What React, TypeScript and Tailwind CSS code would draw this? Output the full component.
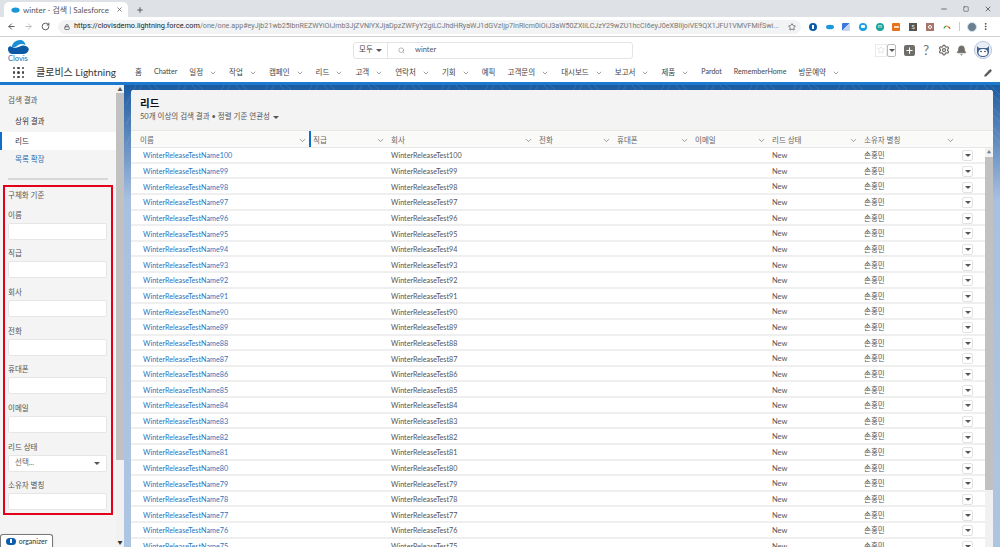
import { ArrowLeft, ArrowRight, RotateCw, Lock, Star, Plus, X, Minus, Square, Search, ChevronDown, Bell, Settings, Pencil, MoreVertical } from "lucide-react";

const rows = Array.from({ length: 26 }, (_, i) => 100 - i);
const nav = [
  ["홈", false], ["Chatter", false], ["일정", true], ["작업", true], ["캠페인", true], ["리드", true], ["고객", true], ["연락처", true], ["기회", true], ["예픽", false],
  ["고객문의", true], ["대시보드", true], ["보고서", true], ["제품", true], ["Pardot", false], ["RememberHome", false], ["방문예약", true],
] as [string, boolean][];
const cols = [
  ["이름", "w-[173px]", false], ["직급", "w-[78px]", true], ["회사", "w-[148px]", false], ["전화", "w-[78px]", false],
  ["휴대폰", "w-[78px]", false], ["이메일", "w-[77px]", false], ["리드 상태", "w-[92px]", false], ["소유자 별칭", "w-[97px]", false],
] as [string, string, boolean][];
const fields = ["이름", "직급", "회사", "전화", "휴대폰", "이메일", "리드 상태", "소유자 별칭"];

function Caret({ className = "" }: { className?: string }) {
  return <span className={`w-0 h-0 border-x-[3px] border-x-transparent border-t-[3.5px] border-t-[#555] ${className}`} />;
}

function Logo() {
  return (
    <svg viewBox="0 0 21 14" className="w-[21px] h-[14px]">
      <path d="M4 7 C4 3 8 0 12 0 C15 0 17 2 17.5 5 C14 3 11 4 9 6 C7 7.5 5 7.5 4 7 Z" fill="#1b8fd6" />
      <path d="M0 9 C0 7 1.5 6 3 6.5 C7 9 11 7 13 6 C16 5 19 6 20.5 8 C21.5 11 19 14 16 14 L5 14 C2 14 0 12 0 9 Z" fill="#0c5aa6" />
    </svg>
  );
}

function Extensions() {
  return (
    <div className="ml-[8px] flex items-center gap-[8.7px] text-[6px] leading-none text-white">
      <span className="w-[8px] h-[8px] rounded-full bg-[#0b5cab] flex items-center justify-center"><span className="w-[2px] h-[4px] bg-white" /></span>
      <svg viewBox="0 0 12 8" className="w-[8px] h-[8px]"><ellipse cx="6" cy="4" rx="6" ry="3.5" fill="#1b96d8" /></svg>
      <span className="w-[8px] h-[8px] rounded-[1px] bg-gradient-to-br from-[#3b78e0] from-50% to-[#c5d4ee] to-50%" />
      <span className="w-[8px] h-[8px] rounded-full bg-[#18a0e4] flex items-center justify-center"><span className="w-[4px] h-[3px] bg-white rounded-[1px]" /></span>
      <span className="w-[8px] h-[8px] rounded-full bg-[#17a59a] flex items-center justify-center text-[5px]">m</span>
      <span className="w-[8px] h-[8px] rounded-[1px] bg-[#e8701a] flex items-center justify-center"><span className="w-[5px] h-[2px] bg-[#ffd9bd]" /></span>
      <span className="w-[8px] h-[8px] bg-[#555] flex items-center justify-center">S</span>
      <span className="w-[8px] h-[8px] bg-[#a8756a] flex items-center justify-center"><span className="w-[4px] h-[4px] rounded-full border border-white" /></span>
      <svg viewBox="0 0 10 8" className="w-[8px] h-[8px]">
        <path d="M1 6 C2 4 3 3 4 3" stroke="#2a9a4a" strokeWidth="1.5" fill="none" />
        <path d="M4 3 C5 2.5 6 3 7 4" stroke="#e0a020" strokeWidth="1.5" fill="none" />
        <path d="M7 4 L9 6" stroke="#d8342c" strokeWidth="1.5" fill="none" />
      </svg>
    </div>
  );
}

function Avatar() {
  return (
    <svg viewBox="0 0 18 18" className="ml-[7px] w-[18px] h-[18px]">
      <circle cx="9" cy="9" r="8.6" fill="#e8eef6" stroke="#9fb3cf" strokeWidth="0.7" />
      <path d="M3 5 L5 7 L13 7 L15 5 L15 11 C15 14 12 16 9 16 C6 16 3 14 3 11 Z" fill="#47648f" />
      <ellipse cx="9" cy="11.5" rx="4.5" ry="3.5" fill="#ffffff" />
      <circle cx="7" cy="10.5" r="0.8" fill="#27374f" />
      <circle cx="11" cy="10.5" r="0.8" fill="#27374f" />
    </svg>
  );
}

export default function App() {
  return (
    <div className="w-[1000px] h-[547px] overflow-hidden flex flex-col bg-white text-[#3e3e3c] font-['Lato','Noto_Sans_CJK_KR',sans-serif]">
      {/* browser tabs */}
      <div className="h-[17px] shrink-0 bg-[#dee1e6] flex items-end pl-[4px]">
        <div className="w-[124px] h-[15px] bg-white rounded-t-[5px] flex items-center pl-[7px] pr-[5px] gap-[3px] text-[8px] text-[#555]">
          <svg viewBox="0 0 12 8" className="w-[9px] h-[6px]"><ellipse cx="6" cy="4" rx="5.5" ry="3.5" fill="#1b96d8" /></svg>
          <span className="flex-1 truncate">winter - 검색 | Salesforce</span>
          <X size={7} strokeWidth={2.5} />
        </div>
        <Plus size={8} strokeWidth={2.5} className="ml-[8px] mb-[3px] text-[#444]" />
        <div className="ml-auto flex items-center gap-[15px] pr-[8px] mb-[4px] text-[#333]">
          <Minus size={8} strokeWidth={2} />
          <Square size={6} strokeWidth={2} />
          <X size={8} strokeWidth={2} />
        </div>
      </div>
      {/* address bar */}
      <div className="h-[20px] shrink-0 flex items-center border-b border-[#d0d0d0] pl-[7px] pr-[7px]">
        <ArrowLeft size={9} strokeWidth={2.5} className="text-[#555]" />
        <ArrowRight size={9} strokeWidth={2.5} className="ml-[8px] text-[#bbb]" />
        <RotateCw size={9} strokeWidth={2.5} className="ml-[8px] text-[#555]" />
        <div className="ml-[8px] w-[743px] h-[14px] rounded-full bg-[#f1f3f4] flex items-center pl-[6px] pr-[5px] gap-[4px]">
          <Lock size={6} strokeWidth={3} className="text-[#555] shrink-0" />
          <span className="flex-1 whitespace-nowrap text-[7.15px] text-[#777] font-['Roboto','Noto_Sans',sans-serif]"><span className="text-[#222] text-[7.3px]">https://clovisdemo.lightning.force.com</span>/one/one.app#eyJjb21wb25lbnREZWYiOiJmb3JjZVNlYXJjaDpzZWFyY2giLCJhdHRyaWJ1dGVzIjp7InRlcm0iOiJ3aW50ZXIiLCJzY29wZU1hcCI6eyJ0eXBlIjoiVE9QX1JFU1VMVFMifSwi...</span>
          <Star size={8} strokeWidth={2} className="text-[#444] shrink-0" />
        </div>
        <Extensions />
        <span className="ml-[8px] w-px h-[9px] bg-[#ccc]" />
        <span className="ml-[7px] w-[10px] h-[10px] rounded-full bg-[#6b7f8f] border border-[#cfe0ee]" />
        <MoreVertical size={9} strokeWidth={2.5} className="ml-[4px] text-[#444]" />
      </div>
      {/* app header */}
      <div className="h-[48px] shrink-0 border-b-[3px] border-[#1b7ad0] bg-white flex flex-col">
        <div className="h-[26px] shrink-0 flex items-center">
          <div className="w-[40px] pl-[8px] pt-[3px] flex flex-col">
            <Logo />
            <span className="mt-[1px] text-[7.5px] leading-[8px] text-[#1a6cb5]">Clovis</span>
          </div>
          <div className="ml-[313px] w-[280px] h-[17px] border border-[#e4e4e4] rounded-[3px] flex items-center text-[7.5px]">
            <div className="w-[34px] h-full border-r border-[#e4e4e4] flex items-center justify-center gap-[3px]">모두 <Caret /></div>
            <Search size={7} className="ml-[10px] text-[#888]" />
            <span className="ml-[10px] text-[#555]">winter</span>
          </div>
          <div className="ml-auto pr-[8px] flex items-center">
            <div className="w-[12px] h-[13px] border border-[#eaeaea] flex items-center justify-center"><Star size={8} className="text-[#ddd]" /></div>
            <div className="w-[9px] h-[13px] border border-[#bbb] rounded-[2px] flex items-center justify-center"><Caret /></div>
            <div className="ml-[8px] w-[11px] h-[11px] rounded-[2px] bg-[#706e6b] flex items-center justify-center"><Plus size={9} strokeWidth={3} className="text-white" /></div>
            <span className="ml-[8px] text-[13px] leading-none text-[#706e6b]">?</span>
            <Settings size={12} strokeWidth={2.5} className="ml-[9px] text-[#706e6b]" />
            <Bell size={11} fill="#706e6b" className="ml-[6px] text-[#706e6b]" />
            <Avatar />
          </div>
        </div>
        <div className="flex-1 flex items-center">
          <div className="w-[11px] h-[11px] grid grid-cols-3 gap-[2px] shrink-0 ml-[13px]">
            {Array.from({ length: 9 }, (_, i) => <span key={i} className="bg-[#444] rounded-full" />)}
          </div>
          <span className="ml-[12px] w-[99px] shrink-0 text-[10px] text-[#333] whitespace-nowrap">클로비스 Lightning</span>
          <div className="flex items-center gap-[12px] text-[7.5px] whitespace-nowrap text-[#444]">
            {nav.map(([t, c]) => (
              <span key={t} className="flex items-center gap-[6px]">
                <span className={/^[A-Za-z]/.test(t) ? "text-[7.1px]" : ""}>{t}</span>
                {c && <ChevronDown size={8} strokeWidth={1.5} />}
              </span>
            ))}
          </div>
          <Pencil size={8} fill="#555" className="ml-auto mr-[8px] text-[#555]" />
        </div>
      </div>
      {/* body */}
      <div className="flex-1 min-h-0 flex">
        <aside className="w-[116px] shrink-0 bg-[#f4f4f4] relative text-[7.5px] text-[#555]">
          <div className="h-[47px] pl-[8px] pt-[11px]">
            <div className="leading-[10px]">검색 결과</div>
            <div className="mt-[11px] pl-[7px] leading-[10px] text-[#333]">상위 결과</div>
          </div>
          <div className="h-[18px] bg-white border-l-2 border-[#0f6fc6] pl-[13px] pt-[2px] flex items-center text-[#333]">리드</div>
          <div className="h-[19px] pl-[15px] pt-[1px] flex items-center text-[#1a6cb5]">목록 확장</div>
          <div className="mx-[8px] mt-[9px] h-[2px] bg-[#d8d8d8]" />
          <div className="ml-[3px] mt-[5px] w-[110px] h-[330px] border-2 border-[#e2001a] pl-[3px] pr-[4px] pt-[4px]">
            <div className="leading-[10px]">구체화 기준</div>
            {fields.map((f) => (
              <div key={f} className="h-[38.67px] flex flex-col justify-end">
                <div className="h-[10px] leading-[10px] mb-[2px]">{f}</div>
                <div className="h-[17px] bg-white border border-[#e6e6e6] rounded-[2px] flex items-center px-[6px]">
                  {f === "리드 상태" && <><span className="flex-1 text-[#666]">선택...</span><Caret className="border-t-[#333]" /></>}
                </div>
              </div>
            ))}
          </div>
          <div className="absolute left-0 bottom-0 w-[53px] h-[13px] bg-white border border-[#777] border-b-0 rounded-t-[3px] flex items-center justify-center gap-[3px] text-[7px] text-[#333] shadow-sm">
            <span className="w-[10px] h-[7px] rounded-full bg-[#0b5cab] flex items-center justify-center"><span className="w-[2px] h-[4px] bg-white" /></span>
            organizer
          </div>
        </aside>
        <div className="w-[8px] shrink-0 bg-[#f1f1f1] flex flex-col items-center">
          <span className="h-[8px] text-[5px] leading-[8px] text-[#555]">▲</span>
          <div className="w-full h-[367px] bg-[#c1c1c1]" />
          <span className="mt-auto mb-[1px] text-[5px] leading-[8px] text-[#333]">▼</span>
        </div>
        <main className="relative flex-1 min-w-0 bg-gradient-to-b from-[#1a5ba0] via-[#a9c1e0] via-25% to-[#adc4e2] px-[7px] pt-[5px]">
          <svg className="absolute left-0 top-0 w-full h-[60px]">
            <defs>
              <pattern id="waves" width="44" height="20" patternUnits="userSpaceOnUse">
                <path d="M2 20 L12 0 M8 20 L18 0 M24 0 C30 8 36 12 42 20 M30 0 L40 10" stroke="#ffffff" strokeOpacity="0.16" strokeWidth="0.7" fill="none" />
              </pattern>
            </defs>
            <rect width="100%" height="100%" fill="url(#waves)" />
          </svg>
          <div className="relative h-[600px] bg-white rounded-t-[3px] flex flex-col">
            <div className="h-[41px] bg-[#f3f3f3] border-b border-[#e8e8e8] rounded-t-[3px] pl-[9px] pt-[6px] shrink-0">
              <div className="text-[10.5px] leading-[14px] font-bold text-[#111]">리드</div>
              <div className="mt-[2px] flex items-center gap-[3px] text-[7.5px] leading-[10px] text-[#555]">50개 이상의 검색 결과 • 정렬 기준 연관성 <Caret /></div>
            </div>
            <div className="h-[17px] shrink-0 flex items-stretch pl-[5px] bg-[#fafaf9] border-b border-[#e8e8e8] text-[7.5px] text-[#666]">
              {cols.map(([t, w, active]) => (
                <div key={t} className={`${w} relative flex items-center pl-[4px] pr-[2px] pt-[3px]`}>
                  {active && <span className="absolute left-0 top-0 bottom-0 w-[2px] bg-[#0f6fc6]" />}
                  <span className="flex-1">{t}</span>
                  <ChevronDown size={9} strokeWidth={1.5} className="text-[#555]" />
                </div>
              ))}
            </div>
            <div className="flex-1 flex min-h-0">
              <div className="flex-1 min-w-0">
                {rows.map((n) => (
                  <div key={n} className="h-[15.64px] flex items-center pl-[5px] border-b-2 border-[#efefef] text-[7.2px] text-[#555]">
                    <div className="w-[173px] pl-[7px] pt-[4px] text-[#2a76bd]">WinterReleaseTestName{n}</div>
                    <div className="w-[78px]" />
                    <div className="w-[148px] pl-[4px] pt-[4px]">WinterReleaseTest{n}</div>
                    <div className="w-[78px]" />
                    <div className="w-[78px]" />
                    <div className="w-[77px]" />
                    <div className="w-[92px] pl-[4px] pt-[2px] text-[7.5px]">New</div>
                    <div className="w-[97px] pl-[4px] pt-[2px] text-[7.5px]">손홍민</div>
                    <div className="w-[11px] h-[11px] mt-[2px] border border-[#e2e2e2] rounded-[2px] flex items-center justify-center bg-white ml-[5px]"><Caret className="border-t-[#444]" /></div>
                  </div>
                ))}
              </div>
              <div className="w-[8px] shrink-0 bg-[#f1f1f1] flex flex-col items-center">
                <span className="h-[9px] text-[4px] leading-[9px] text-[#777]">▲</span>
                <div className="w-full h-[333px] bg-[#c1c1c1]" />
              </div>
            </div>
          </div>
        </main>
      </div>
    </div>
  );
}
